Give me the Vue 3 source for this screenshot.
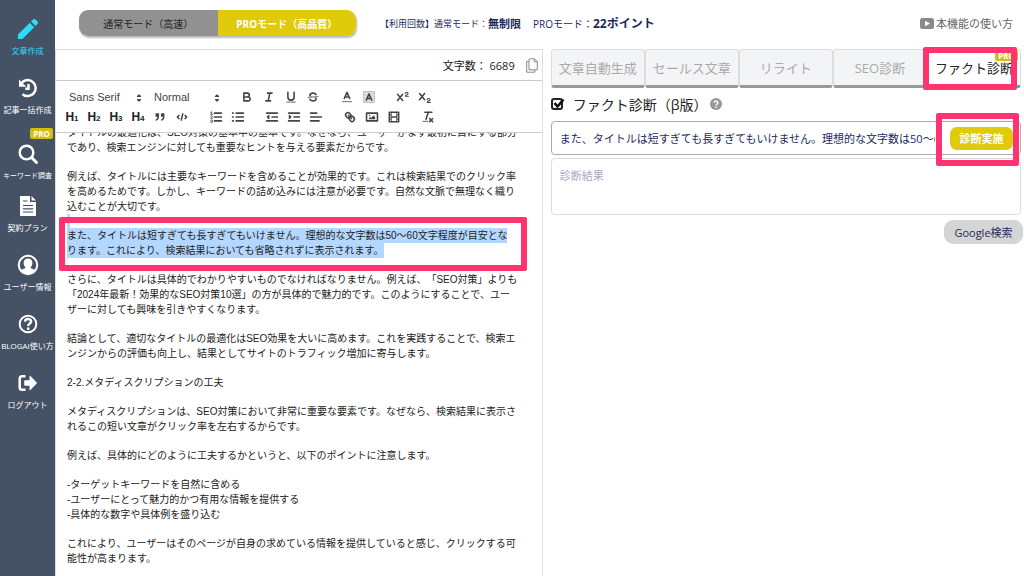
<script setup>
import { ref } from 'vue'

const menu = [
  { id: 'write', label: '文章作成', active: true },
  { id: 'history', label: '記事一括作成' },
  { id: 'search', label: 'キーワード調査', small: true, pro: true },
  { id: 'plan', label: '契約プラン' },
  { id: 'user', label: 'ユーザー情報' },
  { id: 'help', label: 'BLOGAI使い方' },
  { id: 'logout', label: 'ログアウト' },
]

const tabs = [
  { label: '文章自動生成' },
  { label: 'セールス文章' },
  { label: 'リライト' },
  { label: 'SEO診断' },
  { label: 'ファクト診断', active: true },
]

const paragraphs = [
  { lines: ['タイトルの最適化は、SEO対策の基本中の基本です。なぜなら、ユーザーがまず最初に目にする部分', 'であり、検索エンジンに対しても重要なヒントを与える要素だからです。'] },
  { lines: ['例えば、タイトルには主要なキーワードを含めることが効果的です。これは検索結果でのクリック率', 'を高めるためです。しかし、キーワードの詰め込みには注意が必要です。自然な文脈で無理なく織り', '込むことが大切です。'] },
  { selected: true, lines: ['また、タイトルは短すぎても長すぎてもいけません。理想的な文字数は50〜60文字程度が目安とな', 'ります。これにより、検索結果においても省略されずに表示されます。'] },
  { lines: ['さらに、タイトルは具体的でわかりやすいものでなければなりません。例えば、「SEO対策」よりも', '「2024年最新！効果的なSEO対策10選」の方が具体的で魅力的です。このようにすることで、ユー', 'ザーに対しても興味を引きやすくなります。'] },
  { lines: ['結論として、適切なタイトルの最適化はSEO効果を大いに高めます。これを実践することで、検索エ', 'ンジンからの評価も向上し、結果としてサイトのトラフィック増加に寄与します。'] },
  { lines: ['2-2.メタディスクリプションの工夫'] },
  { lines: ['メタディスクリプションは、SEO対策において非常に重要な要素です。なぜなら、検索結果に表示さ', 'れるこの短い文章がクリック率を左右するからです。'] },
  { lines: ['例えば、具体的にどのように工夫するかというと、以下のポイントに注意します。'] },
  { lines: ['-ターゲットキーワードを自然に含める', '-ユーザーにとって魅力的かつ有用な情報を提供する', '-具体的な数字や具体例を盛り込む'] },
  { lines: ['これにより、ユーザーはそのページが自身の求めている情報を提供していると感じ、クリックする可', '能性が高まります。'] },
]

const checked = ref(true)
const target = ref('また、タイトルは短すぎても長すぎてもいけません。理想的な文字数は50〜60文字程度が目安となります。')
const result = ref('')
</script>

<template>
  <div class="app">
    <nav class="sidebar">
      <a v-for="m in menu" :key="m.id" href="#" class="item" :class="{ active: m.active, pro: m.pro, small: m.small }">
        <span v-if="m.pro" class="pro-badge">PRO</span>
        <svg v-if="m.id === 'write'" class="icon" viewBox="0 0 22 22"><path d="M1 16.500 12.700 4.800l4.500 4.500L5.500 21H1zM14 3.500l2-2q1.300-1.200 2.600 0l1.900 1.900q1.200 1.300 0 2.600l-2 2z" /></svg>
        <svg v-else-if="m.id === 'history'" class="icon" viewBox="0 0 22 22"><path class="line" d="M5 5.500A8 8 0 1 1 5.500 17.200M11.500 7v4.800H8.300" /><path d="M2 2.500v7.300h7.300z" /></svg>
        <svg v-else-if="m.id === 'search'" class="icon" viewBox="0 0 22 22"><circle class="line" cx="9.500" cy="9.500" r="6.800" /><path class="line thick" d="m14.800 14.800 4.700 4.700" /></svg>
        <svg v-else-if="m.id === 'plan'" class="icon" viewBox="0 0 22 22"><path d="M3.500 1h9.500v6h6v13.500q0 .5-.5.500h-15q-.5 0-.5-.5v-19q0-.5.500-.5zM14.500 1l4.500 4.500h-4.500z" /><path class="cut" d="M6 6h4.500M6 10.500h10M6 13.800h10M6 17h10" /></svg>
        <svg v-else-if="m.id === 'user'" class="icon" viewBox="0 0 22 22"><circle class="line thin" cx="11" cy="11" r="9.200" /><path d="M11 4.500c3 0 4.400 2 4.400 4.500 0 1.800-.8 3.400-1.800 4.300 0 1.500 2.900 1.500 4.200 2.900-1.800 2.600-4.200 3.600-6.800 3.600s-5-1-6.800-3.600c1.300-1.400 4.200-1.400 4.200-2.900-1-.9-1.800-2.500-1.800-4.300 0-2.500 1.400-4.500 4.400-4.500z" /></svg>
        <svg v-else-if="m.id === 'help'" class="icon" viewBox="0 0 22 22"><circle class="line thin" cx="11" cy="11" r="8.300" /><path class="line" d="M8 8.700c.3-3.600 6.100-3.200 6.100-.2 0 2-2.900 2-2.900 4.400" /><circle cx="11.200" cy="15.700" r="1.400" /></svg>
        <svg v-else class="icon" viewBox="0 0 22 22"><path class="line" d="M8.500 4.200H5.300q-2.600 0-2.600 2.600v8.400q0 2.600 2.600 2.600h3.200" /><path d="M8 8.300h4.500V4.200q.2-.8.900-.3l6.300 6.500q.5.600 0 1.200l-6.300 6.500q-.7.500-.9-.3v-4.100H8q-.8 0-.8-.7V9q0-.7.800-.7z" /></svg>
        <span class="item-label">{{ m.label }}</span>
      </a>
    </nav>

    <div class="main">
      <header class="topbar">
        <div class="modes">
          <button type="button" class="mode">通常モード（高速）</button>
          <button type="button" class="mode on">PROモード（高品質）</button>
        </div>
        <p class="usage">
          <span>【利用回数】通常モード：</span><b>無制限</b>
          <span class="second">PROモード：</span><b class="points">22ポイント</b>
        </p>
        <a href="#" class="howto">
          <svg viewBox="0 0 14 11"><path fill-rule="evenodd" d="M2.500 0h9Q14 0 14 2.500v6Q14 11 11.500 11h-9Q0 11 0 8.500v-6Q0 0 2.500 0zM5 2.700v5.600l5-2.800z" /></svg>本機能の使い方
        </a>
      </header>

      <div class="columns">
        <section class="editor">
          <div class="count">
            <span>文字数： 6689</span>
            <button type="button" class="copy" aria-label="コピー">
              <svg viewBox="0 0 12 15"><path d="M4 .8h4.500L11.300 3.600v8.200H3V1.800q0-1 1-1zM8.300 1v2.800h2.900M2.800 3.500H.7v10.700h8.200v-2" /></svg>
            </button>
          </div>

          <div class="toolbar">
            <div class="tools">
              <span class="picker font">
                <select aria-label="フォント"><option>Sans Serif</option></select>
                <svg viewBox="0 0 18 18"><path class="f s" d="M7 11l2 2 2-2zM7 7l2-2 2 2z" /></svg>
              </span>
              <span class="picker size">
                <select aria-label="サイズ"><option>Normal</option></select>
                <svg viewBox="0 0 18 18"><path class="f s" d="M7 11l2 2 2-2zM7 7l2-2 2 2z" /></svg>
              </span>
              <span class="group">
                <button type="button" aria-label="太字"><svg viewBox="0 0 18 18"><path class="s" d="M5 4h4.500a2.500 2.500 0 0 1 0 5H5zM5 9h5.500a2.500 2.500 0 0 1 0 5H5z" /></svg></button>
                <button type="button" aria-label="斜体"><svg viewBox="0 0 18 18"><path class="s" d="M7 4h6M5 14h6M8 14l2-10" /></svg></button>
                <button type="button" aria-label="下線"><svg viewBox="0 0 18 18"><path class="s" d="M5 3v6a4 4 0 0 0 8 0V3" /><rect class="f" x="3" y="15" width="12" height="1" /></svg></button>
                <button type="button" aria-label="取り消し線"><svg viewBox="0 0 18 18"><path class="s t" d="M15.500 8.500l-13 1" /><path class="f" d="M9.007,8C6.542,7.791,6,7.519,6,6.5,6,5.792,7.283,5,9,5c1.571,0,2.765.679,2.969,1.309a1,1,0,0,0,1.9-.617C13.356,4.106,11.354,3,9,3,6.2,3,4,4.538,4,6.5a3.2,3.2,0,0,0,.5,1.843Z" /><path class="f" d="M8.984,10C11.457,10.208,12,10.479,12,11.5c0,.708-1.283,1.5-3,1.5-1.571,0-2.765-.679-2.969-1.309a1,1,0,1,0-1.9.617C4.644,13.894,6.646,15,9,15c2.8,0,5-1.538,5-3.5a3.2,3.2,0,0,0-.5-1.843Z" /></svg></button>
              </span>
              <span class="group">
                <button type="button" aria-label="文字色"><svg viewBox="0 0 18 18"><path class="s" d="M5.500 11 9 3l3.500 8M11.600 9H6.400" /><path class="s t" d="M3 15h12" /></svg></button>
                <button type="button" aria-label="背景色"><svg viewBox="0 0 18 18"><rect class="dots" x="2" y="2" width="14" height="14" /><path class="s" d="M5.500 13 9 5l3.500 8M11.600 11H6.400" /></svg></button>
              </span>
              <span class="group">
                <button type="button" aria-label="上付き"><svg viewBox="0 0 18 18"><path class="s" d="M2 5.500l6.500 8M8.500 5.500 2 13.500" /><path class="s m" d="M12 4.500c0-2.200 3.500-2 3.500 0C15.500 6 12 6.500 12 8h4" /></svg></button>
                <button type="button" aria-label="下付き"><svg viewBox="0 0 18 18"><path class="s" d="M2 4.500l6.500 8M8.500 4.500 2 12.500" /><path class="s m" d="M12 12.500c0-2.200 3.500-2 3.500 0 0 1.500-3.500 2-3.500 3.500h4" /></svg></button>
              </span>
            </div>
            <div class="tools">
              <span class="group">
                <button v-for="n in 4" :key="n" type="button" class="heading">H<small>{{ n }}</small></button>
                <button type="button" aria-label="引用"><svg viewBox="0 0 18 18"><path class="f s" d="M4 5h3v3H4zM11 5h3v3h-3zM7 8c0 4-3 5-3 5M14 8c0 4-3 5-3 5" /></svg></button>
                <button type="button" aria-label="コード"><svg viewBox="0 0 18 18"><path class="s" d="M5 7 3 9l2 2M13 7l2 2-2 2M10 5 8 13" /></svg></button>
              </span>
              <span class="group">
                <button type="button" aria-label="番号リスト"><svg viewBox="0 0 18 18"><path class="s" d="M7 4h9M7 9h9M7 14h9" /><path class="s t" d="M2 3l1.500-.8V5.500M2 5.500h3M2 8c.5-1 2.500-.8 2.500.3C4.500 9 2 10 2 10.500h3M2 13c1-.8 2.500-.5 2.500.4 0 .8-1 .8-1.500.8.5 0 1.800 0 1.800 1S3 16.500 2 15.700" /></svg></button>
                <button type="button" aria-label="リスト"><svg viewBox="0 0 18 18"><path class="s" d="M6.500 4H16M6.500 9H16M6.500 14H16M2 4h1M2 9h1M2 14h1" /></svg></button>
              </span>
              <span class="group">
                <button type="button" aria-label="字下げ解除"><svg viewBox="0 0 18 18"><path class="s" d="M2 14h14M2 4h14M9 9h7" /><path class="f s" d="M5 7v4L3 9z" /></svg></button>
                <button type="button" aria-label="字下げ"><svg viewBox="0 0 18 18"><path class="s" d="M2 14h14M2 4h14M9 9h7" /><path class="f s" d="M3 7v4l2-2z" /></svg></button>
                <button type="button" aria-label="配置"><svg viewBox="0 0 18 18"><path class="s" d="M2 9h14M2 14h11M2 4h8" /></svg></button>
              </span>
              <span class="group">
                <button type="button" aria-label="リンク"><svg viewBox="0 0 18 18"><path class="s" d="M7 7l4 4" /><path class="s" d="M8.900,4.577a3.476,3.476,0,0,1,.36,4.679A3.476,3.476,0,0,1,4.577,8.900C3.185,7.500,2.035,6.400,4.217,4.217S7.500,3.185,8.900,4.577Z" /><path class="s" d="M13.423,9.100a3.476,3.476,0,0,0-4.679-.36,3.476,3.476,0,0,0,.36,4.679c1.392,1.392,2.500,2.542,4.679.36S14.815,10.500,13.423,9.100Z" /></svg></button>
                <button type="button" aria-label="画像"><svg viewBox="0 0 18 18"><rect class="s" x="2" y="4" width="14" height="10" /><circle class="f" cx="6" cy="7" r="1" /><path class="f" d="M5 12v-1l2-2 1 1 3-3 2 2v3z" /></svg></button>
                <button type="button" aria-label="動画"><svg viewBox="0 0 18 18"><rect class="s" x="3" y="3" width="12" height="12" /><path class="f" d="M5 3h1v12H5zM12 3h1v12h-1zM5 8h8v2H5zM3 5h3v1H3zM3 7h3v1H3zM3 10h3v1H3zM3 12h3v1H3zM12 5h3v1h-3zM12 7h3v1h-3zM12 10h3v1h-3zM12 12h3v1h-3z" /></svg></button>
              </span>
              <span class="group">
                <button type="button" aria-label="書式解除"><svg viewBox="0 0 18 18"><path class="s" d="M5 3h9M6.400 12 9.500 3M11 11l4 4M15 11l-4 4" /><rect class="f" x="2" y="14" width="7" height="1" /></svg></button>
              </span>
            </div>
          </div>

          <div class="content">
            <article class="text">
              <p v-for="(p, i) in paragraphs" :key="i" :class="{ selected: p.selected }">
                <template v-for="(line, j) in p.lines" :key="j"><span class="line">{{ line }}</span><br></template>
                <span v-if="p.selected" class="mark"></span>
              </p>
            </article>
          </div>
        </section>

        <section class="panel">
          <div class="tabs" role="tablist">
            <button v-for="t in tabs" :key="t.label" type="button" role="tab" class="tab" :class="{ active: t.active }">
              {{ t.label }}
              <template v-if="t.active"><span class="pro-badge">PRO</span><span class="mark"></span></template>
            </button>
          </div>

          <label class="check">
            <span class="box">
              <input v-model="checked" type="checkbox">
              <svg v-if="checked" viewBox="0 0 14 14"><path d="M3.500 6l3 3.500L12.500 2.500" /></svg>
            </span>
            <span>ファクト診断（β版）</span>
            <svg class="hint" viewBox="0 0 12 12"><circle cx="6" cy="6" r="6" /><path d="M4.200 4.700c.1-2.300 3.700-2 3.700 0C7.900 6 6.100 6 6.100 7.500M6.100 8.500V10" /></svg>
          </label>

          <div class="field">
            <input v-model="target" type="text" aria-label="診断する文章">
            <button type="button" class="run">診断実施</button>
            <span class="mark"></span>
          </div>
          <textarea v-model="result" aria-label="診断結果" placeholder="診断結果"></textarea>
          <button type="button" class="google">Google検索</button>
        </section>
      </div>
    </div>
  </div>
</template>

<style>
body {
  margin: 0;
  background: #fff;
}
</style>

<style scoped>
* {
  box-sizing: border-box;
}
.app {
  display: flex;
  height: 100vh;
  overflow: hidden;
  font-family: "Open Sans", "Noto Sans CJK JP", sans-serif;
  font-size: 11px;
  color: #222;
  text-spacing-trim: space-all;
}
button, input, select, textarea {
  font: inherit;
  color: inherit;
  margin: 0;
  padding: 0;
  border: 0;
  background: none;
}
a {
  text-decoration: none;
}
p {
  margin: 0;
}

.sidebar {
  flex: 0 0 55px;
  background: #455164;
}
.item {
  position: relative;
  display: flex;
  flex-direction: column;
  align-items: center;
  gap: 5px;
  height: 59px;
  padding-top: 18px;
  color: #fff;
  font-size: 8px;
  line-height: 12px;
  white-space: nowrap;
}
.item.pro {
  padding-top: 25px;
}
.item.small {
  font-size: 7px;
}
.item.active {
  color: #2bdcf8;
}
.icon {
  flex: none;
  width: 22px;
  height: 22px;
  fill: currentColor;
}
.icon .line {
  fill: none;
  stroke: currentColor;
  stroke-width: 2.5;
}
.icon .thin {
  stroke-width: 2;
}
.icon .thick {
  stroke-width: 3;
  stroke-linecap: round;
}
.icon .cut {
  stroke: #455164;
  stroke-width: 1.2;
}
.pro-badge {
  position: absolute;
  top: 10px;
  right: 2px;
  width: 23px;
  border-radius: 2px;
  background: #d4be14;
  color: #fff;
  font-size: 8px;
  font-weight: 700;
  line-height: 11px;
  text-align: center;
}

.main {
  flex: 1;
  min-width: 0;
  display: flex;
  flex-direction: column;
}
.topbar {
  flex: 0 0 49px;
  display: flex;
  align-items: center;
  padding: 0 11px 3px 24px;
  color: #1e2a5c;
  white-space: nowrap;
}
.modes {
  display: flex;
  width: 277px;
  height: 26px;
  overflow: hidden;
  border-radius: 9px;
  box-shadow: 1px 2px 2px #bbb;
}
.mode {
  flex: 1;
  background: #919191;
  color: #222;
  font-size: 10px;
}
.mode.on {
  background: #dfca0c;
  color: #fff;
  font-weight: 700;
}
.usage {
  display: flex;
  align-items: center;
  margin-left: 24px;
  font-size: 9px;
}
.usage b {
  font-size: 11px;
}
.usage .second {
  margin-left: 12px;
  font-size: 10px;
}
.usage .points {
  font-size: 12px;
}
.howto {
  display: flex;
  align-items: center;
  gap: 2px;
  margin-left: auto;
  color: #666;
}
.howto svg {
  width: 14px;
  height: 11px;
  fill: #8a8a8a;
}

.columns {
  flex: 1;
  min-height: 0;
  display: grid;
  grid-template-columns: 28fr 27fr;
  gap: 8px;
  padding-right: 3px;
}
.editor {
  min-width: 0;
  min-height: 0;
  display: flex;
  flex-direction: column;
  border: solid #ddd;
  border-width: 1px 1px 0;
}
.count {
  display: flex;
  align-items: center;
  justify-content: flex-end;
  gap: 11px;
  height: 30px;
  padding-right: 4px;
}
.copy {
  display: flex;
}
.copy svg {
  width: 12px;
  height: 15px;
  fill: none;
  stroke: #888;
}
.toolbar {
  border-top: 1px solid #ccc;
  border-bottom: 1px solid #ccc;
  padding: 6px 0 5px 5px;
  color: #444;
}
.tools {
  display: flex;
  height: 20px;
  align-items: center;
}
.picker {
  position: relative;
  display: flex;
  font-family: "Liberation Sans", sans-serif;
  font-size: 11px;
}
.picker select {
  width: 100%;
  padding-left: 8px;
  appearance: none;
}
.picker svg {
  position: absolute;
  right: 0;
  top: 0;
  width: 14px;
  height: 14px;
}
.font {
  width: 85px;
}
.size {
  width: 78px;
  margin-right: 12px;
}
.group {
  display: flex;
  margin-right: 12px;
}
.tools button {
  display: flex;
  justify-content: center;
  align-items: center;
  width: 22px;
  height: 18px;
}
.tools button svg {
  width: 14px;
  height: 14px;
}
.tools button.heading {
  align-items: baseline;
  color: #222;
  font-family: "Liberation Sans", sans-serif;
  font-size: 12px;
  font-weight: 700;
  line-height: 18px;
}
.heading small {
  font-size: 8px;
}
.s {
  fill: none;
  stroke: #444;
  stroke-width: 2;
  stroke-linecap: round;
  stroke-linejoin: round;
}
.f {
  fill: #444;
}
.t {
  stroke-width: 1;
}
.m {
  stroke-width: 1.4;
}
.f.s {
  stroke-width: 1.5;
}
.dots {
  fill: #ddd;
  stroke: #777;
  stroke-dasharray: 1 1;
}
.content {
  flex: 1;
  min-height: 0;
  overflow: hidden;
  padding-left: 11px;
}
.text {
  display: flex;
  flex-direction: column;
  gap: 14px;
  margin-top: -8px;
  color: #222;
  font-family: "Liberation Sans", "Noto Sans CJK JP", sans-serif;
  font-size: 10px;
  line-height: 15px;
  white-space: nowrap;
}
.text p {
  position: relative;
}
.line {
  display: inline-block;
  vertical-align: top;
}
.selected .line {
  background: #b3d7ff;
}
.selected::before {
  content: "";
  position: absolute;
  left: 0;
  top: -14px;
  width: 3px;
  height: 14px;
  background: #b3d7ff;
}
.mark {
  position: absolute;
  z-index: 2;
  border: 6px solid #ff336f;
  border-radius: 2px;
  pointer-events: none;
}
.selected .mark {
  inset: -11px 15px -13px -8px;
}

.panel {
  min-width: 0;
  display: flex;
  flex-direction: column;
}
.tabs {
  display: flex;
  height: 39px;
}
.tab {
  position: relative;
  flex: 1;
  border: 1px solid #ddd;
  border-bottom: 3px solid #999;
  border-radius: 3px;
  background: #f3f4f6;
  color: #aaa;
  font-size: 13px;
  white-space: nowrap;
}
.tab.active {
  border-bottom-color: #31b5d8;
  background: #fff;
  color: #222;
}
.tab .mark {
  inset: -3px 3px -5px -5px;
}
.tab .pro-badge {
  top: 0;
}
.check {
  display: flex;
  align-items: center;
  gap: 8px;
  height: 32px;
  font-size: 14px;
}
.box {
  position: relative;
  display: flex;
  width: 14px;
  height: 14px;
}
.box input {
  width: 12px;
  height: 12px;
  margin-top: 1px;
  border: 2px solid #222;
  border-radius: 3px;
  appearance: none;
}
.box svg {
  position: absolute;
  inset: 0;
  fill: none;
  stroke: #111;
  stroke-width: 2.6;
}
.hint {
  width: 12px;
  height: 12px;
  margin-left: -5px;
  fill: #999;
}
.hint path {
  fill: none;
  stroke: #fff;
  stroke-width: 1.5;
}
.field {
  position: relative;
  display: flex;
  align-items: center;
  gap: 15px;
  height: 34px;
  margin-top: 1px;
  padding: 0 7px 0 8px;
  border: 1px solid #aaa;
  border-radius: 4px;
}
.field input {
  flex: 1;
  min-width: 0;
  color: #1e2a5c;
}
.run {
  width: 63px;
  height: 23px;
  border-radius: 7px;
  background: #dfca0c;
  color: #fff;
  font-weight: 700;
}
.field .mark {
  inset: -9px 1px -12px auto;
  width: 83px;
}
textarea {
  height: 57px;
  margin-top: 3px;
  padding: 8px;
  border: 1px solid #ddd;
  border-radius: 4px;
  resize: none;
}
textarea::placeholder {
  color: #a5acc0;
}
.google {
  align-self: flex-end;
  width: 79px;
  height: 24px;
  margin: 5px -2px 0 0;
  border-radius: 9px;
  background: #d5d5d5;
  color: #1e2a5c;
}
</style>
